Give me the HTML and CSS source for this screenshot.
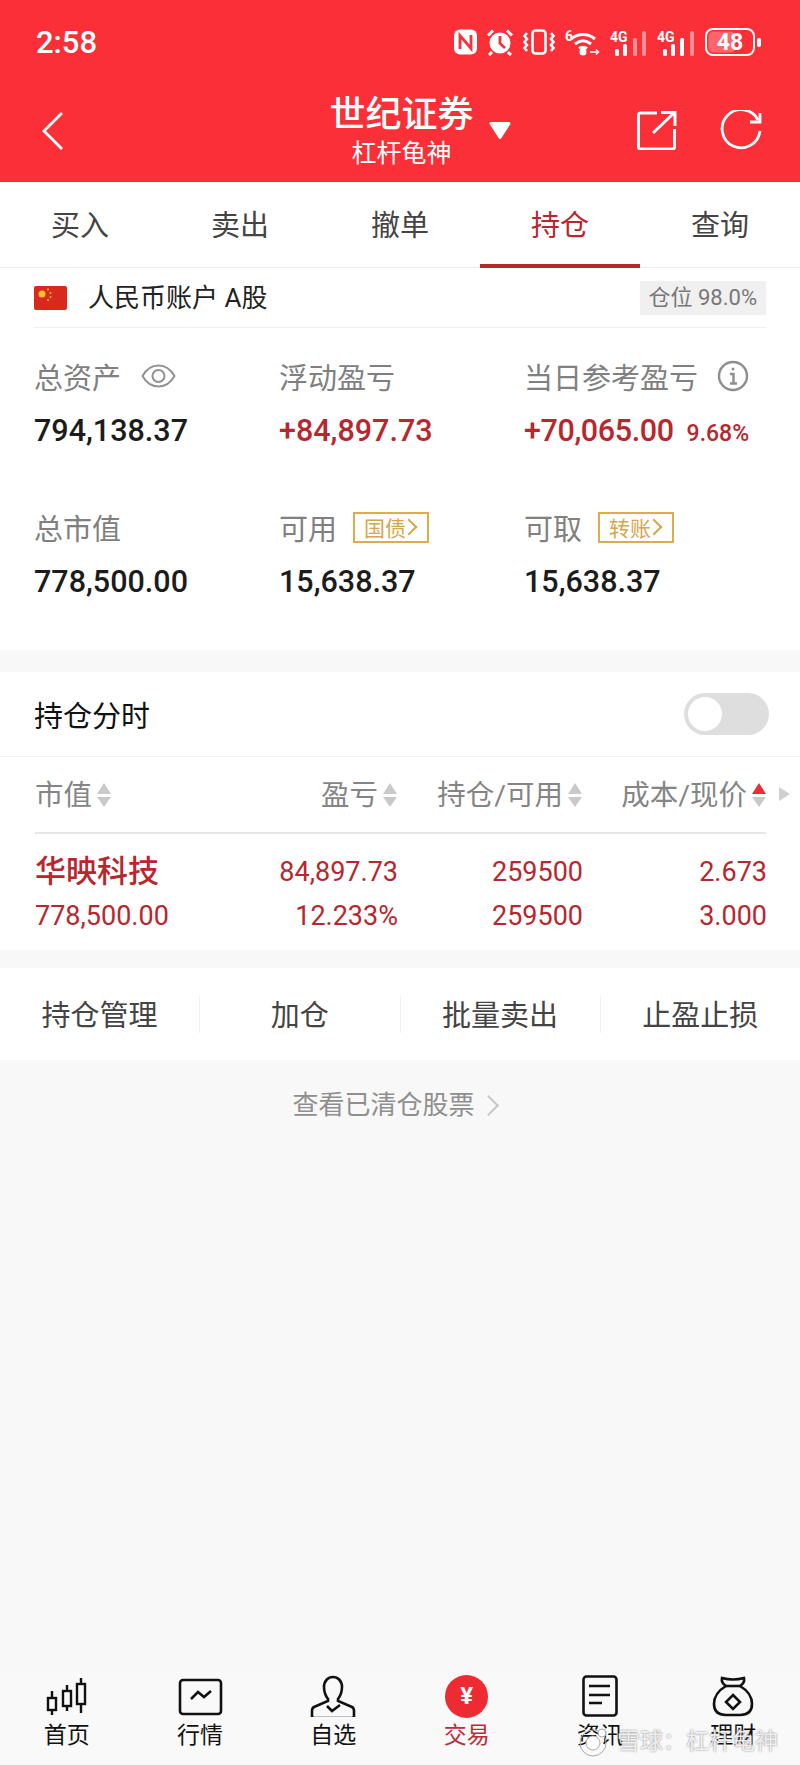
FILE: index.html
```html
<!DOCTYPE html>
<html>
<head>
	<meta charset="utf-8">
	<meta name="viewport" content="width=device-width, initial-scale=1">
	<title>世纪证券</title>
	<link rel="stylesheet" href="styles.css">
</head>
<body>
<div class="page">

	<!-- barra roja: estado del telefono y titulo -->
	<header class="top">
		<div class="status">
			<span class="clock">2:58</span>
			<div class="status-icons">
				<svg width="23" height="26" viewBox="0 0 23 26"><rect y="0.5" width="23" height="25" rx="6" fill="#fff"/><path d="M6 20V6.500L17 19.500V6" fill="none" stroke="#fb2f37" stroke-width="2.800"/></svg>
				<svg width="26" height="27" viewBox="0 0 26 27"><circle cx="13" cy="14" r="10.500" fill="#fff"/><path d="M13 7v7.500l5 4.500" fill="none" stroke="#fb2f37" stroke-width="2.800"/><path d="M1 6.500l5-5M25 6.500l-5-5M5 23l-3 3M21 23l3 3" stroke="#fff" stroke-width="3" fill="none"/></svg>
				<svg width="32" height="26" viewBox="0 0 32 26" fill="none" stroke="#fff" stroke-width="2.600"><rect x="9.500" y="1.500" width="13" height="23" rx="3"/><path d="M4 4L1.500 7 4 10 1.500 13 4 16 1.500 19 4 22M28 4l2.500 3L28 10l2.500 3L28 16l2.500 3L28 22"/></svg>
				<svg width="35" height="27" viewBox="0 0 35 27" fill="none" stroke="#fff" stroke-width="3"><path d="M6 10c7-6 17-6 24 0M10 15c5-4 11-4 16 0M14 19.500c2-1.500 6-1.500 8 0"/><circle cx="18" cy="23" r="3.500" fill="#fff" stroke="none"/><path d="M25 23h8M31 20.500l2.500 2.500-2.500 2.500" stroke-width="1.500"/><text x="0" y="12" class="mini">6</text></svg>
				<svg width="37" height="27" viewBox="0 0 37 27"><text x="0" y="13" class="mini">4G</text><rect x="5" y="20" width="4" height="7" rx="1.500" fill="#fff"/><rect x="13" y="15" width="4" height="12" rx="1.500" fill="#fff"/><rect x="23" y="9" width="4" height="18" rx="1.500" fill="#ffffff77"/><rect x="32" y="2" width="4" height="25" rx="1.500" fill="#ffffff77"/></svg>
				<svg width="38" height="27" viewBox="0 0 38 27"><text x="0" y="13" class="mini">4G</text><rect x="6" y="20" width="4" height="7" rx="1.500" fill="#fff"/><rect x="14" y="15" width="4" height="12" rx="1.500" fill="#fff"/><rect x="23" y="9" width="4" height="18" rx="1.500" fill="#fff"/><rect x="33" y="2" width="4" height="25" rx="1.500" fill="#ffffff77"/></svg>
				<svg width="56" height="28" viewBox="0 0 56 28"><rect x="1" y="1" width="48" height="26" rx="7" fill="none" stroke="#fff" stroke-width="2"/><rect x="3.500" y="3.500" width="27" height="21" rx="5" fill="#ffffff44"/><rect x="52" y="10" width="4" height="9" rx="2" fill="#fff"/><text x="25" y="22" text-anchor="middle" class="batt">48</text></svg>
			</div>
		</div>
		<div class="titlebar">
			<svg class="back" width="24" height="40" viewBox="0 0 24 40"><path d="M21 2L3 20l18 18" fill="none" stroke="#fff" stroke-width="2.800"/></svg>
			<div class="title-wrap">
				<div class="title">世纪证券</div>
				<div class="subtitle">杠杆龟神</div>
				<svg class="caret" width="24" height="19" viewBox="0 0 24 19"><path d="M3 2.500h18L12 16.500z" fill="#fff" stroke="#fff" stroke-width="3" stroke-linejoin="round"/></svg>
			</div>
			<div class="title-actions">
				<svg width="40" height="40" viewBox="0 0 40 40" fill="none" stroke="#fff" stroke-width="3"><path d="M20 3H3.500A2 2 0 0 0 1.500 5v32a2 2 0 0 0 2 2h32a2 2 0 0 0 2-2V19"/><path d="M16 23L37 3M24 2.500h14V16"/></svg>
				<svg width="42" height="42" viewBox="0 0 42 42" fill="none" stroke="#fff" stroke-width="2.800"><path d="M38 10A19 19 0 1 0 40 21"/><path d="M40 3v9H30" fill="none"/></svg>
			</div>
		</div>
	</header>

	<nav class="tabs">
		<div class="tab">买入</div>
		<div class="tab">卖出</div>
		<div class="tab">撤单</div>
		<div class="tab active">持仓</div>
		<div class="tab">查询</div>
	</nav>

	<section class="panel summary">
		<div class="account">
			<svg class="flag" width="33" height="24" viewBox="0 0 33 24"><rect width="33" height="24" rx="2" fill="#d9291c"/><circle cx="8" cy="8" r="3.500" fill="#f6c12f"/><circle cx="14" cy="3.500" r="1" fill="#f6c12f"/><circle cx="16.500" cy="7" r="1" fill="#f6c12f"/><circle cx="16.500" cy="11" r="1" fill="#f6c12f"/><circle cx="14" cy="14" r="1" fill="#f6c12f"/></svg>
			<span class="account-name">人民币账户 A股</span>
			<span class="ratio">仓位 98.0%</span>
		</div>
		<div class="stats">
			<div class="stat">
				<div class="stat-label">总资产
					<svg class="eye" width="35" height="26" viewBox="0 0 35 26" fill="none" stroke="#929292" stroke-width="2"><path d="M1.500 13C6 5 11 2.500 17.500 2.500S29 5 33.500 13C29 21 24 23.500 17.500 23.500S6 21 1.500 13z"/><circle cx="17.500" cy="13" r="6"/></svg>
				</div>
				<div class="stat-value">794,138.37</div>
			</div>
			<div class="stat">
				<div class="stat-label">浮动盈亏</div>
				<div class="stat-value up">+84,897.73</div>
			</div>
			<div class="stat">
				<div class="stat-label">当日参考盈亏
					<svg class="info" width="32" height="32" viewBox="0 0 32 32" fill="none" stroke="#8e8e8e" stroke-width="2.400"><circle cx="16" cy="16" r="14"/><path d="M13 14h3.500v9M13 23.500h7"/><circle cx="16" cy="9" r="1.500" fill="#8e8e8e" stroke="none"/></svg>
				</div>
				<div class="stat-value up tight">+70,065.00<span class="pct">9.68%</span></div>
			</div>
			<div class="stat">
				<div class="stat-label">总市值</div>
				<div class="stat-value">778,500.00</div>
			</div>
			<div class="stat">
				<div class="stat-label">可用<span class="tag">国债<i class="tag-arrow"></i></span></div>
				<div class="stat-value">15,638.37</div>
			</div>
			<div class="stat">
				<div class="stat-label">可取<span class="tag">转账<i class="tag-arrow"></i></span></div>
				<div class="stat-value">15,638.37</div>
			</div>
		</div>
	</section>

	<section class="panel holdings">
		<div class="switch-row">
			<span>持仓分时</span>
			<span class="switch"><span class="knob"></span></span>
		</div>
		<div class="grid head">
			<div class="left">市值<span class="sort"></span></div>
			<div>盈亏<span class="sort"></span></div>
			<div>持仓/可用<span class="sort"></span></div>
			<div>成本/现价<span class="sort on"></span></div>
			<span class="more"></span>
		</div>
		<div class="grid line">
			<div class="left name">华映科技</div>
			<div>84,897.73</div>
			<div>259500</div>
			<div>2.673</div>
			<div class="left">778,500.00</div>
			<div>12.233%</div>
			<div>259500</div>
			<div>3.000</div>
		</div>
	</section>

	<section class="panel actions">
		<div class="action">持仓管理</div>
		<div class="action">加仓</div>
		<div class="action">批量卖出</div>
		<div class="action">止盈止损</div>
	</section>

	<div class="cleared">查看已清仓股票<i class="cleared-arrow"></i></div>

	<footer class="bottom">
		<div class="item">
			<svg width="50" height="42" viewBox="0 0 50 42" fill="none" stroke="#111" stroke-width="2.400"><path d="M10 16v7M10 35v5M25 10v6M25 31v5M39 3v6M39 29v9"/><rect x="6" y="23" width="8" height="12"/><rect x="21" y="16" width="8" height="15"/><rect x="35" y="9" width="8" height="20"/></svg>
			<span>首页</span>
		</div>
		<div class="item">
			<svg width="50" height="42" viewBox="0 0 50 42" fill="none" stroke="#111" stroke-width="2.600"><rect x="5" y="5" width="41" height="34" rx="3"/><path d="M16 24l7-7 6 5 7-6"/></svg>
			<span>行情</span>
		</div>
		<div class="item">
			<svg width="50" height="42" viewBox="0 0 50 42" fill="none" stroke="#111" stroke-width="2.600"><path d="M20 24C17 20 16 16 16 12 16 6 20 2 25 2s9 4 9 10c0 4-1 8-4 12v2l14 6q2 1 2 4v5q0 2-2 2H6q-2 0-2-2v-5q0-3 2-4l14-6z"/><path d="M19 31l5 5 8-6"/></svg>
			<span>自选</span>
		</div>
		<div class="item current">
			<span class="yuan">¥</span>
			<span>交易</span>
		</div>
		<div class="item">
			<svg width="50" height="42" viewBox="0 0 50 42" fill="none" stroke="#111" stroke-width="2.600"><rect x="8.500" y="1.500" width="33" height="39" rx="3"/><path d="M14 11h21M14 20h21M14 28h13"/></svg>
			<span>资讯</span>
		</div>
		<div class="item">
			<svg width="50" height="42" viewBox="0 0 50 42" fill="none" stroke="#111" stroke-width="2.600"><path d="M14 3q11 3 22 0q1 5-4 8 12 7 12 18 0 11-12 11H18Q6 40 6 29q0-11 12-18-5-3-4-8z"/><path d="M18 11h14"/><path d="M25 20l7 7-7 7-7-7z"/></svg>
			<span>理财</span>
		</div>
		<!-- marca de agua encima de la barra -->
		<div class="mark">
			<svg width="34" height="32" viewBox="0 0 34 32" fill="#fff" stroke="#aaa" stroke-width="1"><circle cx="16" cy="17" r="13" fill="none"/><circle cx="16" cy="17" r="7"/><circle cx="25" cy="7" r="4"/></svg>
			<span>雪球：杠杆龟神</span>
		</div>
	</footer>
</div>
</body>
</html>
```

FILE: styles.css
```css
* {
	box-sizing: border-box;
}
body {
	margin: 0;
	background-color: #f8f8f8;
	font-family: Roboto, "Noto Sans CJK SC", sans-serif;
	color: #111;
}
.page {
	display: flex;
	flex-direction: column;
	height: 1765px;
	overflow: hidden;
}

/* barra roja */
.top {
	height: 182px;
	background-color: #fb2f37;
	border-bottom: 1px solid #d8343a;
	color: #fff;
}
.status {
	height: 84px;
	padding: 0 39px 0 36px;
	display: flex;
	align-items: center;
	justify-content: space-between;
}
.clock {
	font-size: 31px;
	font-weight: 500;
}
.status-icons {
	display: flex;
	align-items: center;
	gap: 10px;
}
.mini {
	font-size: 14px;
	font-weight: 700;
	fill: #fff;
	stroke: none;
}
.batt {
	font-size: 23px;
	font-weight: 700;
	fill: #fff;
}
.titlebar {
	display: grid;
	grid-template-columns: 1fr auto 1fr;
	align-items: start;
	padding: 0 38px 0 41px;
}
.back {
	margin-top: 27px;
}
.title-wrap {
	position: relative;
	text-align: center;
}
.title {
	font-size: 36px;
	font-weight: 500;
	line-height: 50px;
	margin-top: 6px;
}
.subtitle {
	font-size: 25px;
	line-height: 30px;
	margin-top: -1px;
}
.caret {
	position: absolute;
	left: 159px;
	top: 37px;
}
.title-actions {
	display: flex;
	justify-content: flex-end;
	gap: 43px;
	margin-top: 26px;
}

/* pestanas */
.tabs {
	display: flex;
	height: 86px;
	background-color: #fff;
	border-bottom: 1px solid #efefef;
}
.tab {
	flex: 1;
	text-align: center;
	font-size: 29px;
	line-height: 88px;
	color: #444;
}
.tab.active {
	color: #b9262d;
	border-bottom: 4px solid #b5282e;
	height: 86px;
}

.panel {
	background-color: #fff;
}
.summary {
	height: 382px;
	padding: 0 34px;
}
.account {
	display: flex;
	align-items: center;
	height: 60px;
	border-bottom: 1px solid #f0f0f0;
}
.flag {
	margin-right: 21px;
}
.account-name {
	font-size: 26px;
	line-height: 34px;
	color: #222;
}
.ratio {
	margin-left: auto;
	background-color: #f0f0f0;
	padding: 0 9px;
	font-size: 22px;
	line-height: 34px;
	color: #777;
}
.stats {
	display: grid;
	grid-template-columns: 245px 245px 1fr;
	grid-auto-rows: 151px;
	padding-top: 25px;
}
.stat-label {
	display: flex;
	align-items: center;
	height: 46px;
	font-size: 29px;
	color: #808080;
}
.eye {
	margin-left: 20px;
}
.info {
	margin-left: 19px;
}
.stat-value {
	margin-top: 7px;
	font-size: 30.500px;
	font-weight: 500;
	line-height: 50px;
	color: #1c1c1c;
}
.up {
	color: #b9262d;
}
.tight {
	letter-spacing: -0.4px;
}
.pct {
	font-size: 23px;
	margin-left: 13px;
	letter-spacing: 0;
}
.tag {
	display: inline-flex;
	align-items: center;
	margin-left: 16px;
	padding-left: 9px;
	width: 76px;
	height: 31px;
	border: 2px solid #dcae48;
	font-size: 21px;
	color: #d3a84c;
}
.tag-arrow {
	width: 12px;
	height: 12px;
	margin-left: -3px;
	border-top: 2px solid #d3a84c;
	border-right: 2px solid #d3a84c;
	transform: rotate(45deg);
}

/* tabla de posiciones */
.holdings {
	margin-top: 22px;
}
.switch-row {
	display: flex;
	align-items: center;
	justify-content: space-between;
	height: 85px;
	padding: 0 31px 0 34px;
	border-bottom: 1px solid #f1f1f1;
	font-size: 29px;
}
.switch {
	display: block;
	width: 85px;
	height: 42px;
	padding: 4px;
	border-radius: 21px;
	background-color: #dedede;
}
.knob {
	display: block;
	width: 34px;
	height: 34px;
	border-radius: 50%;
	background-color: #fff;
}
.grid {
	display: grid;
	grid-template-columns: 171px 192px 185px 184px;
	margin: 0 35px;
	text-align: right;
}
.left {
	text-align: left;
}
.head {
	position: relative;
	height: 77px;
	margin-right: 34px;
	border-bottom: 2px solid #e6e6e6;
	font-size: 28.500px;
	line-height: 77px;
	color: #858585;
}
.sort {
	position: relative;
	display: inline-block;
	width: 15px;
	height: 24px;
	margin-left: 5px;
	vertical-align: -2px;
}
.sort::before,
.sort::after {
	content: "";
	position: absolute;
	left: 0;
	border-left: 7.500px solid transparent;
	border-right: 7.500px solid transparent;
}
.sort::before {
	top: 0;
	border-bottom: 11px solid #c9c9c9;
}
.sort::after {
	bottom: 0;
	border-top: 10px solid #c9c9c9;
}
.sort.on::before {
	border-bottom-color: #ef2b35;
}
.more {
	position: absolute;
	left: 744px;
	top: 30px;
	border-top: 7px solid transparent;
	border-bottom: 7px solid transparent;
	border-left: 11px solid #cfcfcf;
}
.line {
	padding: 16px 0 12px;
	height: 116px;
	font-size: 27px;
	line-height: 44px;
	color: #b9262d;
}
.name {
	font-size: 31px;
	font-weight: 500;
}

.actions {
	display: flex;
	align-items: center;
	height: 92px;
	margin-top: 18px;
}
.action {
	flex: 1;
	padding-top: 3px;
	text-align: center;
	font-size: 29px;
	line-height: 34px;
	color: #444;
	border-right: 1px solid #f2f2f2;
}
.action:last-child {
	border-right: 0;
}
.cleared {
	flex: 1;
	padding: 27px 12px 0 0;
	text-align: center;
	font-size: 26px;
	line-height: 36px;
	color: #8f8f8f;
}
.cleared-arrow {
	display: inline-block;
	width: 15px;
	height: 15px;
	margin-left: 6px;
	border-top: 2px solid #c6c6c6;
	border-right: 2px solid #c6c6c6;
	transform: rotate(45deg);
	vertical-align: 1px;
}

/* barra inferior */
.bottom {
	position: relative;
	display: flex;
	height: 94px;
	padding-top: 4px;
	background-color: #f9f9f9;
}
.item {
	flex: 1;
	display: flex;
	flex-direction: column;
	align-items: center;
	font-size: 23px;
	line-height: 32px;
	color: #111;
}
.item svg {
	display: block;
	height: 42px;
	margin-bottom: 3px;
}
.item.current {
	color: #bd2a38;
}
.yuan {
	width: 43px;
	height: 43px;
	margin-bottom: 2px;
	border-radius: 50%;
	background-color: #ee2a33;
	color: #fff;
	font-size: 24px;
	font-weight: 700;
	line-height: 43px;
	text-align: center;
}
.mark {
	position: absolute;
	left: 577px;
	top: 55px;
	display: flex;
	align-items: center;
	gap: 6px;
	font-size: 23px;
	line-height: 32px;
	color: rgba(255, 255, 255, 0.85);
	text-shadow: 0 0 2px #777;
}
.mark svg {
	display: block;
	height: 32px;
	margin: 0;
}
```
